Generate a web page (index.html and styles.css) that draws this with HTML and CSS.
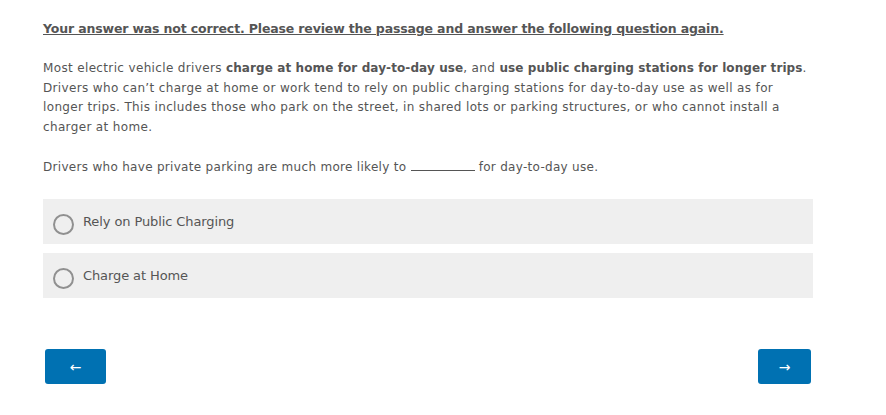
FILE: index.html
```html
<!DOCTYPE html>
<html>
<head>
<meta charset="utf-8">
<link rel="stylesheet" href="styles.css">
</head>
<body>
<div class="page">
  <p class="feedback">Your answer was not correct. Please review the passage and answer the following question again.</p>
  <p class="passage">Most electric vehicle drivers <strong>charge at home for day-to-day use</strong>, and <strong>use public charging stations for longer trips</strong>. Drivers who can’t charge at home or work tend to rely on public charging stations for day-to-day use as well as for longer trips. This includes those who park on the street, in shared lots or parking structures, or who cannot install a charger at home.</p>
  <p class="question">Drivers who have private parking are much more likely to <span class="blank"></span> for day-to-day use.</p>
  <div class="options">
    <label class="option"><span class="radio"></span><span class="opt-text">Rely on Public Charging</span></label>
    <label class="option"><span class="radio"></span><span class="opt-text">Charge at Home</span></label>
  </div>
  <div class="nav">
    <button class="btn btn-prev">←</button>
    <button class="btn btn-next">→</button>
  </div>
</div>
</body>
</html>
```
FILE: styles.css
```css
html, body {
  margin: 0;
  padding: 0;
  background: #fff;
}
.page {
  width: 770px;
  margin-left: 43px;
  padding-top: 19px;
  font-family: "DejaVu Sans", sans-serif;
  color: #555;
  font-size: 12px;
}
.feedback {
  margin: 0;
  font-weight: bold;
  font-size: 12.5px;
  line-height: 20px;
  text-decoration: underline;
  letter-spacing: -0.15px;
}
.passage {
  margin: 20px 0 0;
  line-height: 19.5px;
  letter-spacing: 0.35px;
}
.passage strong {
  color: #555;
  letter-spacing: 0.1px;
}
.question {
  margin: 20px 0 0;
  line-height: 20px;
  letter-spacing: 0.3px;
}
.blank {
  display: inline-block;
  width: 64px;
  border-bottom: 1px solid #555;
  vertical-align: baseline;
}
.options {
  margin-top: 22px;
  display: flex;
  flex-direction: column;
  gap: 9px;
}
.option {
  display: flex;
  align-items: center;
  height: 45px;
  background: #efefef;
  padding-left: 10px;
}
.radio {
  border: 2px solid #909090;
  border-radius: 50%;
  box-sizing: border-box;
  width: 21px;
  height: 21px;
  margin-top: 5px;
}
.opt-text {
  margin-left: 9px;
  font-size: 13px;
  letter-spacing: -0.1px;
}
.nav {
  margin-top: 51px;
  display: flex;
  justify-content: space-between;
  padding: 0 2px;
}
.btn {
  height: 35px;
  border: none;
  border-radius: 3px;
  background: #0071b2;
  color: #fff;
  font-size: 14px;
  font-family: "DejaVu Sans", sans-serif;
  padding: 0;
}
.btn-prev { width: 61px; }
.btn-next { width: 53px; }
```
